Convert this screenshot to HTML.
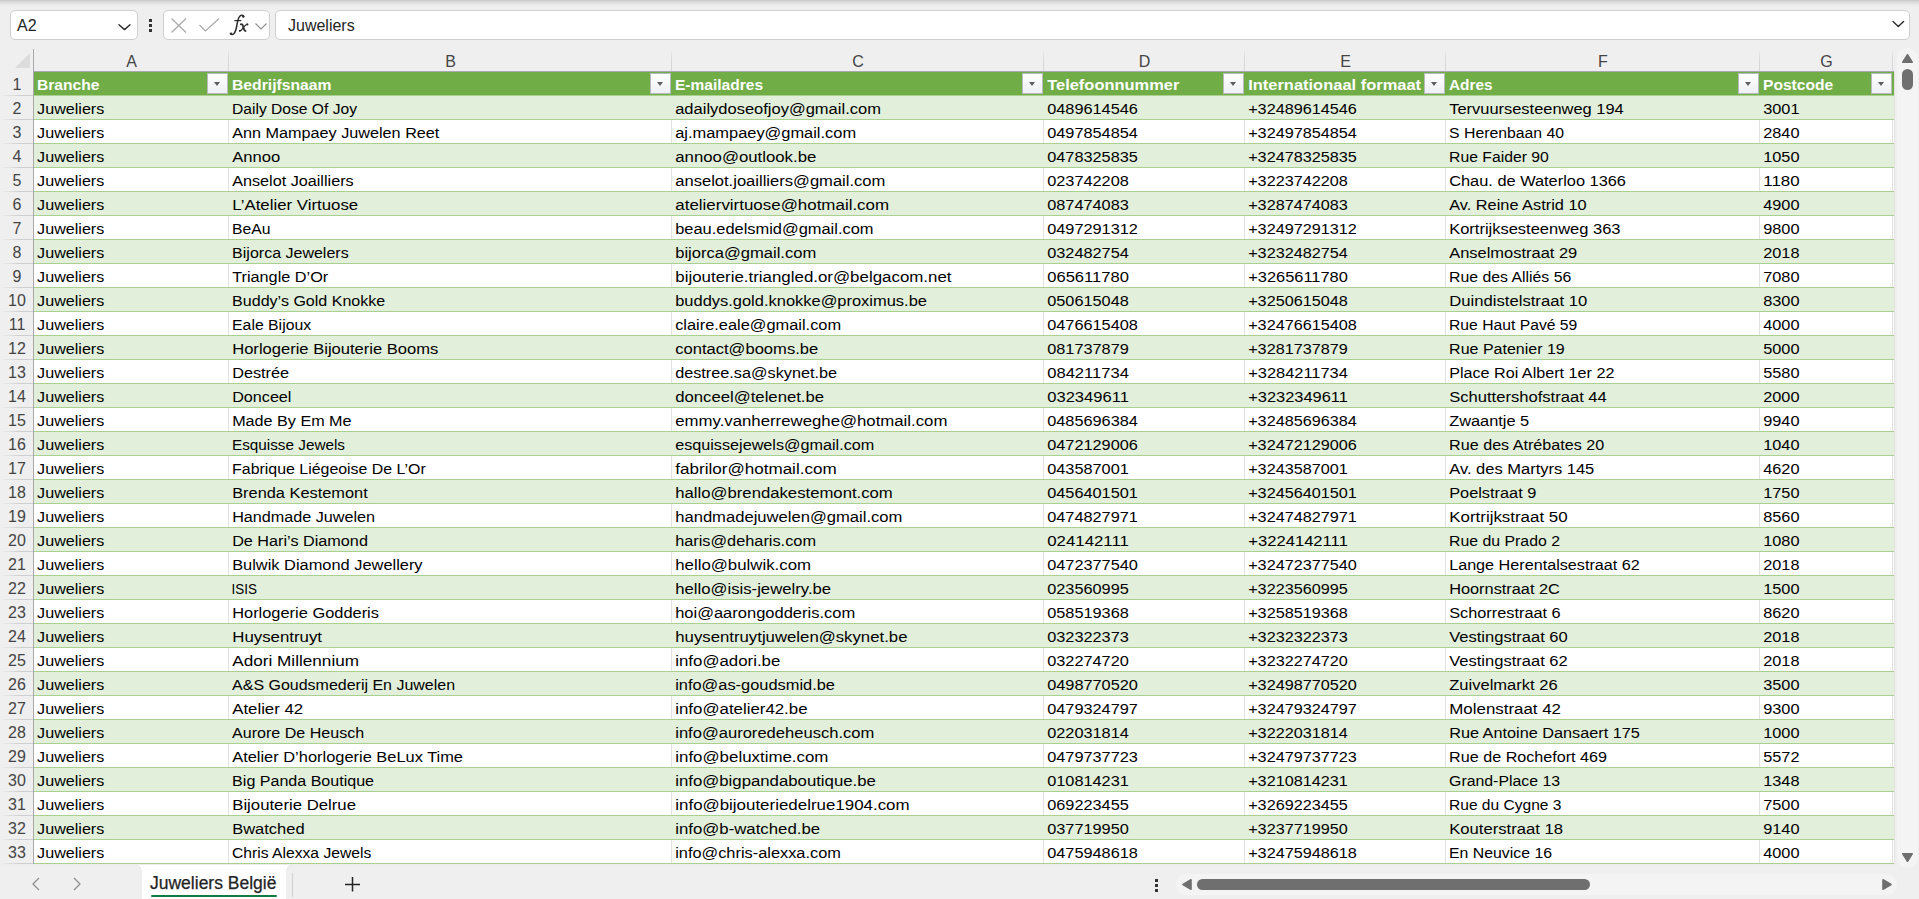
<!DOCTYPE html><html><head><meta charset="utf-8"><style>*{margin:0;padding:0;box-sizing:border-box}
html,body{width:1919px;height:899px;overflow:hidden;background:#efefef;font-family:"Liberation Sans",sans-serif;color:#000;position:relative}
.topshadow{position:absolute;left:0;top:0;width:1919px;height:7px;background:linear-gradient(#c6c6c6,#d9d9d9 25%,#ebebeb 70%,#efefef)}
.box{position:absolute;background:#fff;border:1px solid #cfcfcf;border-radius:5px}
.nb{left:10px;top:10px;width:128px;height:30px}
.nbt{position:absolute;left:17px;top:17px;font-size:16px;line-height:18px;color:#242424}
.dots{position:absolute;left:149px;width:3px;height:3px;background:#333}
.fbx{left:163px;top:10px;width:107px;height:30px}
.fin{left:275px;top:10px;width:1635px;height:30px}
.fint{position:absolute;left:288px;top:17px;font-size:16px;line-height:18px;color:#242424}
svg{position:absolute;overflow:visible}
.colhdr{position:absolute;left:0;top:48px;width:1894px;height:24px}
.selall{position:absolute;left:15px;top:5px;width:0;height:0;border-left:15px solid transparent;border-bottom:15px solid #dcdcdc}
.ch{position:absolute;top:0;height:23px;line-height:28px;padding-left:1px;text-align:center;font-size:16px;color:#444}
.chl{position:absolute;top:1px;width:1px;height:22px;background:linear-gradient(rgba(216,216,216,0),#d8d8d8 45%)}
.colhdr:after{content:"";position:absolute;left:33px;top:23px;width:1861px;height:1px;background:#a8a8b0}
.rh{position:absolute;left:0;width:34px;height:24px;text-align:center;font-size:16px;line-height:26px;color:#444}
.rh:after{content:"";position:absolute;left:0;right:0;bottom:0;height:1px;background:linear-gradient(90deg,rgba(200,200,200,0),#cfcfcf 60%)}
.rhline{position:absolute;left:33px;top:49px;width:1px;height:816px;background:#a9a9a9}
.grid{position:absolute;left:34px;top:72px;width:1860px;height:792px;overflow:hidden}
.row{position:absolute;left:0;width:1860px;height:24px}
.hdr{background:#70ad47}
.band{background:#e2efda;border-bottom:1px solid #a9d08e}
.white{background:#fff;border-bottom:1px solid #a9d08e}
.hdr{border-bottom:1px solid #a9d08e}
.vg{position:absolute;width:1px;height:23px;background:#e1e1e1}
.ht{position:absolute;top:0;height:24px;line-height:25px;padding-left:3px;font-weight:bold;color:#fff;font-size:15.5px;white-space:nowrap;transform-origin:0 0}
.fb{position:absolute;top:1px;width:21px;height:21px;border:1px solid #b9b9c0;background:linear-gradient(#ffffff,#eef0f4)}
.fb i{position:absolute;left:6px;top:8px;width:0;height:0;border-left:3.6px solid transparent;border-right:3.6px solid transparent;border-top:4px solid #5e5e5e}
.c{position:absolute;height:24px;line-height:25px;padding-left:3px;font-size:15.5px;white-space:nowrap;color:#000;transform-origin:0 0}
.c2{letter-spacing:0.3px}
.bbar{position:absolute;left:0;top:864px;width:1919px;height:35px;background:#efefef}
.bbar{background:#fff}
.pl{position:absolute;left:0;top:865px;width:141px;height:34px;background:#efefef;border-top-right-radius:6px;box-shadow:0 0 0 0.6px #e2e2e2}
.pr{position:absolute;left:287px;top:865px;width:1640px;height:34px;background:#efefef;border-top-left-radius:6px;box-shadow:0 0 0 0.6px #e2e2e2}
.tabt{position:absolute;left:150px;top:873px;font-size:17.5px;line-height:20px;color:#242424;-webkit-text-stroke:0.25px #242424;white-space:nowrap}
.tabu{position:absolute;left:151px;top:895px;width:126px;height:2px;background:#107c41;border-radius:1px}
.tsep{position:absolute;left:292px;top:873px;width:1px;height:24px;background:#d0d0d0}
.htrack{position:absolute;left:1176px;top:874px;width:721px;height:21px;border-radius:10.5px;background:#f4f4f4}
.hthumb{position:absolute;left:1197px;top:879px;width:393px;height:11px;border-radius:5.5px;background:#6f6f6f}
.rgap{position:absolute;left:1894px;top:48px;width:25px;height:817px;background:#efefef}
.vtrack{position:absolute;left:1897px;top:48px;width:21px;height:820px;border-radius:10.5px;background:#f4f4f4}
.vthumb{position:absolute;left:1902px;top:69px;width:11px;height:21px;border-radius:5.5px;background:#6f6f6f}
</style></head><body>
<div class="topshadow"></div>
<div class="box nb"></div>
<div class="nbt">A2</div>
<svg style="left:118px;top:24px" width="13" height="7" viewBox="0 0 13 7"><path d="M1 0.8 L6.5 5.6 L12 0.8" fill="none" stroke="#2b2b2b" stroke-width="1.4" stroke-linecap="round" stroke-linejoin="round"/></svg>
<div class="dots" style="top:19px"></div><div class="dots" style="top:24px"></div><div class="dots" style="top:29px"></div>
<div class="box fbx"></div>
<svg style="left:171px;top:18px" width="16" height="15" viewBox="0 0 16 15"><path d="M0.5 0.5 L15 14.5 M15 0.5 L0.5 14.5" fill="none" stroke="#a8a8a8" stroke-width="1.2"/></svg>
<svg style="left:199px;top:18px" width="21" height="14" viewBox="0 0 21 14"><path d="M0.5 7 L6.5 13 L20 0.5" fill="none" stroke="#a8a8a8" stroke-width="1.2"/></svg>
<svg style="left:225px;top:12px" width="30" height="26" viewBox="0 0 30 26"><g fill="none" stroke="#2e2e2e" stroke-linecap="round"><path d="M18.6 4.6 C18.2 3.2 16.2 2.8 14.8 4.2 C13.2 5.8 12.6 9 12 12.5 C11.4 16.5 10.6 20 8.8 21.8 C7.8 22.8 6.4 22.8 5.6 21.8" stroke-width="1.5"/><path d="M9.8 8.6 H15.9" stroke-width="1.1"/><path d="M15.8 12.4 C17 11.8 17.6 12.5 18 14 C18.6 16.5 19 18.6 20.6 19" stroke-width="1.8"/><path d="M22.6 12.2 C21 12.2 19.6 14 17.6 16.6 C16.6 18 15.8 19 14.6 19" stroke-width="1.2"/></g><g fill="#2e2e2e"><circle cx="18.3" cy="4.5" r="1.2"/><circle cx="6.0" cy="21.6" r="1.2"/><circle cx="22.4" cy="12.4" r="1.0"/><circle cx="14.9" cy="18.8" r="1.0"/></g></svg>
<svg style="left:255px;top:23px" width="12" height="7" viewBox="0 0 12 7"><path d="M0.5 0.5 L6 6 L11.5 0.5" fill="none" stroke="#909090" stroke-width="1.1"/></svg>
<div class="box fin"></div>
<div class="fint">Juweliers</div>
<svg style="left:1892px;top:21px" width="13" height="7" viewBox="0 0 13 7"><path d="M1 0.6 L6.3 5.6 L11.6 0.6" fill="none" stroke="#2b2b2b" stroke-width="1.4" stroke-linecap="round" stroke-linejoin="round"/></svg>

<div class="colhdr">
<div class="selall"></div>
<div class="ch" style="left:34px;width:194px">A</div>
<div class="chl" style="left:228px"></div>
<div class="ch" style="left:229px;width:442px">B</div>
<div class="chl" style="left:671px"></div>
<div class="ch" style="left:672px;width:371px">C</div>
<div class="chl" style="left:1043px"></div>
<div class="ch" style="left:1044px;width:200px">D</div>
<div class="chl" style="left:1244px"></div>
<div class="ch" style="left:1245px;width:200px">E</div>
<div class="chl" style="left:1445px"></div>
<div class="ch" style="left:1446px;width:313px">F</div>
<div class="chl" style="left:1759px"></div>
<div class="ch" style="left:1760px;width:132px">G</div>
<div class="chl" style="left:1892px"></div>
</div>
<div class="rh" style="top:72px">1</div>
<div class="rh" style="top:96px">2</div>
<div class="rh" style="top:120px">3</div>
<div class="rh" style="top:144px">4</div>
<div class="rh" style="top:168px">5</div>
<div class="rh" style="top:192px">6</div>
<div class="rh" style="top:216px">7</div>
<div class="rh" style="top:240px">8</div>
<div class="rh" style="top:264px">9</div>
<div class="rh" style="top:288px">10</div>
<div class="rh" style="top:312px">11</div>
<div class="rh" style="top:336px">12</div>
<div class="rh" style="top:360px">13</div>
<div class="rh" style="top:384px">14</div>
<div class="rh" style="top:408px">15</div>
<div class="rh" style="top:432px">16</div>
<div class="rh" style="top:456px">17</div>
<div class="rh" style="top:480px">18</div>
<div class="rh" style="top:504px">19</div>
<div class="rh" style="top:528px">20</div>
<div class="rh" style="top:552px">21</div>
<div class="rh" style="top:576px">22</div>
<div class="rh" style="top:600px">23</div>
<div class="rh" style="top:624px">24</div>
<div class="rh" style="top:648px">25</div>
<div class="rh" style="top:672px">26</div>
<div class="rh" style="top:696px">27</div>
<div class="rh" style="top:720px">28</div>
<div class="rh" style="top:744px">29</div>
<div class="rh" style="top:768px">30</div>
<div class="rh" style="top:792px">31</div>
<div class="rh" style="top:816px">32</div>
<div class="rh" style="top:840px">33</div>
<div class="rhline"></div>
<div class="grid">
<div class="row hdr" style="top:0px"></div>
<div class="row band" style="top:24px"></div>
<div class="row white" style="top:48px"></div>
<div class="row band" style="top:72px"></div>
<div class="row white" style="top:96px"></div>
<div class="row band" style="top:120px"></div>
<div class="row white" style="top:144px"></div>
<div class="row band" style="top:168px"></div>
<div class="row white" style="top:192px"></div>
<div class="row band" style="top:216px"></div>
<div class="row white" style="top:240px"></div>
<div class="row band" style="top:264px"></div>
<div class="row white" style="top:288px"></div>
<div class="row band" style="top:312px"></div>
<div class="row white" style="top:336px"></div>
<div class="row band" style="top:360px"></div>
<div class="row white" style="top:384px"></div>
<div class="row band" style="top:408px"></div>
<div class="row white" style="top:432px"></div>
<div class="row band" style="top:456px"></div>
<div class="row white" style="top:480px"></div>
<div class="row band" style="top:504px"></div>
<div class="row white" style="top:528px"></div>
<div class="row band" style="top:552px"></div>
<div class="row white" style="top:576px"></div>
<div class="row band" style="top:600px"></div>
<div class="row white" style="top:624px"></div>
<div class="row band" style="top:648px"></div>
<div class="row white" style="top:672px"></div>
<div class="row band" style="top:696px"></div>
<div class="row white" style="top:720px"></div>
<div class="row band" style="top:744px"></div>
<div class="row white" style="top:768px"></div>
<div class="vg" style="left:194px;top:48px"></div>
<div class="vg" style="left:637px;top:48px"></div>
<div class="vg" style="left:1009px;top:48px"></div>
<div class="vg" style="left:1210px;top:48px"></div>
<div class="vg" style="left:1411px;top:48px"></div>
<div class="vg" style="left:1725px;top:48px"></div>
<div class="vg" style="left:1858px;top:48px"></div>
<div class="vg" style="left:194px;top:96px"></div>
<div class="vg" style="left:637px;top:96px"></div>
<div class="vg" style="left:1009px;top:96px"></div>
<div class="vg" style="left:1210px;top:96px"></div>
<div class="vg" style="left:1411px;top:96px"></div>
<div class="vg" style="left:1725px;top:96px"></div>
<div class="vg" style="left:1858px;top:96px"></div>
<div class="vg" style="left:194px;top:144px"></div>
<div class="vg" style="left:637px;top:144px"></div>
<div class="vg" style="left:1009px;top:144px"></div>
<div class="vg" style="left:1210px;top:144px"></div>
<div class="vg" style="left:1411px;top:144px"></div>
<div class="vg" style="left:1725px;top:144px"></div>
<div class="vg" style="left:1858px;top:144px"></div>
<div class="vg" style="left:194px;top:192px"></div>
<div class="vg" style="left:637px;top:192px"></div>
<div class="vg" style="left:1009px;top:192px"></div>
<div class="vg" style="left:1210px;top:192px"></div>
<div class="vg" style="left:1411px;top:192px"></div>
<div class="vg" style="left:1725px;top:192px"></div>
<div class="vg" style="left:1858px;top:192px"></div>
<div class="vg" style="left:194px;top:240px"></div>
<div class="vg" style="left:637px;top:240px"></div>
<div class="vg" style="left:1009px;top:240px"></div>
<div class="vg" style="left:1210px;top:240px"></div>
<div class="vg" style="left:1411px;top:240px"></div>
<div class="vg" style="left:1725px;top:240px"></div>
<div class="vg" style="left:1858px;top:240px"></div>
<div class="vg" style="left:194px;top:288px"></div>
<div class="vg" style="left:637px;top:288px"></div>
<div class="vg" style="left:1009px;top:288px"></div>
<div class="vg" style="left:1210px;top:288px"></div>
<div class="vg" style="left:1411px;top:288px"></div>
<div class="vg" style="left:1725px;top:288px"></div>
<div class="vg" style="left:1858px;top:288px"></div>
<div class="vg" style="left:194px;top:336px"></div>
<div class="vg" style="left:637px;top:336px"></div>
<div class="vg" style="left:1009px;top:336px"></div>
<div class="vg" style="left:1210px;top:336px"></div>
<div class="vg" style="left:1411px;top:336px"></div>
<div class="vg" style="left:1725px;top:336px"></div>
<div class="vg" style="left:1858px;top:336px"></div>
<div class="vg" style="left:194px;top:384px"></div>
<div class="vg" style="left:637px;top:384px"></div>
<div class="vg" style="left:1009px;top:384px"></div>
<div class="vg" style="left:1210px;top:384px"></div>
<div class="vg" style="left:1411px;top:384px"></div>
<div class="vg" style="left:1725px;top:384px"></div>
<div class="vg" style="left:1858px;top:384px"></div>
<div class="vg" style="left:194px;top:432px"></div>
<div class="vg" style="left:637px;top:432px"></div>
<div class="vg" style="left:1009px;top:432px"></div>
<div class="vg" style="left:1210px;top:432px"></div>
<div class="vg" style="left:1411px;top:432px"></div>
<div class="vg" style="left:1725px;top:432px"></div>
<div class="vg" style="left:1858px;top:432px"></div>
<div class="vg" style="left:194px;top:480px"></div>
<div class="vg" style="left:637px;top:480px"></div>
<div class="vg" style="left:1009px;top:480px"></div>
<div class="vg" style="left:1210px;top:480px"></div>
<div class="vg" style="left:1411px;top:480px"></div>
<div class="vg" style="left:1725px;top:480px"></div>
<div class="vg" style="left:1858px;top:480px"></div>
<div class="vg" style="left:194px;top:528px"></div>
<div class="vg" style="left:637px;top:528px"></div>
<div class="vg" style="left:1009px;top:528px"></div>
<div class="vg" style="left:1210px;top:528px"></div>
<div class="vg" style="left:1411px;top:528px"></div>
<div class="vg" style="left:1725px;top:528px"></div>
<div class="vg" style="left:1858px;top:528px"></div>
<div class="vg" style="left:194px;top:576px"></div>
<div class="vg" style="left:637px;top:576px"></div>
<div class="vg" style="left:1009px;top:576px"></div>
<div class="vg" style="left:1210px;top:576px"></div>
<div class="vg" style="left:1411px;top:576px"></div>
<div class="vg" style="left:1725px;top:576px"></div>
<div class="vg" style="left:1858px;top:576px"></div>
<div class="vg" style="left:194px;top:624px"></div>
<div class="vg" style="left:637px;top:624px"></div>
<div class="vg" style="left:1009px;top:624px"></div>
<div class="vg" style="left:1210px;top:624px"></div>
<div class="vg" style="left:1411px;top:624px"></div>
<div class="vg" style="left:1725px;top:624px"></div>
<div class="vg" style="left:1858px;top:624px"></div>
<div class="vg" style="left:194px;top:672px"></div>
<div class="vg" style="left:637px;top:672px"></div>
<div class="vg" style="left:1009px;top:672px"></div>
<div class="vg" style="left:1210px;top:672px"></div>
<div class="vg" style="left:1411px;top:672px"></div>
<div class="vg" style="left:1725px;top:672px"></div>
<div class="vg" style="left:1858px;top:672px"></div>
<div class="vg" style="left:194px;top:720px"></div>
<div class="vg" style="left:637px;top:720px"></div>
<div class="vg" style="left:1009px;top:720px"></div>
<div class="vg" style="left:1210px;top:720px"></div>
<div class="vg" style="left:1411px;top:720px"></div>
<div class="vg" style="left:1725px;top:720px"></div>
<div class="vg" style="left:1858px;top:720px"></div>
<div class="vg" style="left:194px;top:768px"></div>
<div class="vg" style="left:637px;top:768px"></div>
<div class="vg" style="left:1009px;top:768px"></div>
<div class="vg" style="left:1210px;top:768px"></div>
<div class="vg" style="left:1411px;top:768px"></div>
<div class="vg" style="left:1725px;top:768px"></div>
<div class="vg" style="left:1858px;top:768px"></div>
<div class="ht" style="left:0px;transform:scaleX(1.007)">Branche</div>
<div class="fb" style="left:173px"><i></i></div>
<div class="ht" style="left:195px;transform:scaleX(1.012)">Bedrijfsnaam</div>
<div class="fb" style="left:616px"><i></i></div>
<div class="ht" style="left:638px;transform:scaleX(1.002)">E-mailadres</div>
<div class="fb" style="left:988px"><i></i></div>
<div class="ht" style="left:1010px;transform:scaleX(1.061)">Telefoonnummer</div>
<div class="fb" style="left:1189px"><i></i></div>
<div class="ht" style="left:1211px;transform:scaleX(1.062)">Internationaal formaat</div>
<div class="fb" style="left:1390px"><i></i></div>
<div class="ht" style="left:1412px;transform:scaleX(0.992)">Adres</div>
<div class="fb" style="left:1704px"><i></i></div>
<div class="ht" style="left:1726px;transform:scaleX(1.006)">Postcode</div>
<div class="fb" style="left:1837px"><i></i></div>
<div class="c" style="left:0px;top:24px;transform:scaleX(1.0398)">Juweliers</div>
<div class="c" style="left:195px;top:24px;transform:scaleX(1.0072)">Daily Dose Of Joy</div>
<div class="c" style="left:638px;top:24px;transform:scaleX(1.0646)">adailydoseofjoy@gmail.com</div>
<div class="c" style="left:1010px;top:24px;transform:scaleX(1.0526)">0489614546</div>
<div class="c" style="left:1211px;top:24px;transform:scaleX(1.0467)">+32489614546</div>
<div class="c" style="left:1412px;top:24px;transform:scaleX(1.0607)">Tervuursesteenweg 194</div>
<div class="c" style="left:1726px;top:24px;transform:scaleX(1.0527)">3001</div>
<div class="c" style="left:0px;top:48px;transform:scaleX(1.0398)">Juweliers</div>
<div class="c" style="left:195px;top:48px;transform:scaleX(1.0458)">Ann Mampaey Juwelen Reet</div>
<div class="c" style="left:638px;top:48px;transform:scaleX(1.0593)">aj.mampaey@gmail.com</div>
<div class="c" style="left:1010px;top:48px;transform:scaleX(1.0526)">0497854854</div>
<div class="c" style="left:1211px;top:48px;transform:scaleX(1.0467)">+32497854854</div>
<div class="c" style="left:1412px;top:48px;transform:scaleX(1.0189)">S Herenbaan 40</div>
<div class="c" style="left:1726px;top:48px;transform:scaleX(1.0527)">2840</div>
<div class="c" style="left:0px;top:72px;transform:scaleX(1.0398)">Juweliers</div>
<div class="c" style="left:195px;top:72px;transform:scaleX(1.0713)">Annoo</div>
<div class="c" style="left:638px;top:72px;transform:scaleX(1.0820)">annoo@outlook.be</div>
<div class="c" style="left:1010px;top:72px;transform:scaleX(1.0526)">0478325835</div>
<div class="c" style="left:1211px;top:72px;transform:scaleX(1.0467)">+32478325835</div>
<div class="c" style="left:1412px;top:72px;transform:scaleX(1.0151)">Rue Faider 90</div>
<div class="c" style="left:1726px;top:72px;transform:scaleX(1.0527)">1050</div>
<div class="c" style="left:0px;top:96px;transform:scaleX(1.0398)">Juweliers</div>
<div class="c" style="left:195px;top:96px;transform:scaleX(1.0448)">Anselot Joailliers</div>
<div class="c" style="left:638px;top:96px;transform:scaleX(1.0687)">anselot.joailliers@gmail.com</div>
<div class="c" style="left:1010px;top:96px;transform:scaleX(1.0526)">023742208</div>
<div class="c" style="left:1211px;top:96px;transform:scaleX(1.0462)">+3223742208</div>
<div class="c" style="left:1412px;top:96px;transform:scaleX(1.0558)">Chau. de Waterloo 1366</div>
<div class="c" style="left:1726px;top:96px;transform:scaleX(1.0887)">1180</div>
<div class="c" style="left:0px;top:120px;transform:scaleX(1.0398)">Juweliers</div>
<div class="c" style="left:195px;top:120px;transform:scaleX(1.0851)">L’Atelier Virtuose</div>
<div class="c" style="left:638px;top:120px;transform:scaleX(1.0921)">ateliervirtuose@hotmail.com</div>
<div class="c" style="left:1010px;top:120px;transform:scaleX(1.0526)">087474083</div>
<div class="c" style="left:1211px;top:120px;transform:scaleX(1.0462)">+3287474083</div>
<div class="c" style="left:1412px;top:120px;transform:scaleX(1.0538)">Av. Reine Astrid 10</div>
<div class="c" style="left:1726px;top:120px;transform:scaleX(1.0527)">4900</div>
<div class="c" style="left:0px;top:144px;transform:scaleX(1.0398)">Juweliers</div>
<div class="c" style="left:195px;top:144px;transform:scaleX(1.0130)">BeAu</div>
<div class="c" style="left:638px;top:144px;transform:scaleX(1.0594)">beau.edelsmid@gmail.com</div>
<div class="c" style="left:1010px;top:144px;transform:scaleX(1.0526)">0497291312</div>
<div class="c" style="left:1211px;top:144px;transform:scaleX(1.0467)">+32497291312</div>
<div class="c" style="left:1412px;top:144px;transform:scaleX(1.0632)">Kortrijksesteenweg 363</div>
<div class="c" style="left:1726px;top:144px;transform:scaleX(1.0527)">9800</div>
<div class="c" style="left:0px;top:168px;transform:scaleX(1.0398)">Juweliers</div>
<div class="c" style="left:195px;top:168px;transform:scaleX(1.0330)">Bijorca Jewelers</div>
<div class="c" style="left:638px;top:168px;transform:scaleX(1.0679)">bijorca@gmail.com</div>
<div class="c" style="left:1010px;top:168px;transform:scaleX(1.0526)">032482754</div>
<div class="c" style="left:1211px;top:168px;transform:scaleX(1.0462)">+3232482754</div>
<div class="c" style="left:1412px;top:168px;transform:scaleX(1.0619)">Anselmostraat 29</div>
<div class="c" style="left:1726px;top:168px;transform:scaleX(1.0527)">2018</div>
<div class="c" style="left:0px;top:192px;transform:scaleX(1.0398)">Juweliers</div>
<div class="c" style="left:195px;top:192px;transform:scaleX(1.0493)">Triangle D’Or</div>
<div class="c" style="left:638px;top:192px;transform:scaleX(1.0895)">bijouterie.triangled.or@belgacom.net</div>
<div class="c" style="left:1010px;top:192px;transform:scaleX(1.0686)">065611780</div>
<div class="c" style="left:1211px;top:192px;transform:scaleX(1.0591)">+3265611780</div>
<div class="c" style="left:1412px;top:192px;transform:scaleX(1.0202)">Rue des Alliés 56</div>
<div class="c" style="left:1726px;top:192px;transform:scaleX(1.0527)">7080</div>
<div class="c" style="left:0px;top:216px;transform:scaleX(1.0398)">Juweliers</div>
<div class="c" style="left:195px;top:216px;transform:scaleX(1.0355)">Buddy’s Gold Knokke</div>
<div class="c" style="left:638px;top:216px;transform:scaleX(1.0616)">buddys.gold.knokke@proximus.be</div>
<div class="c" style="left:1010px;top:216px;transform:scaleX(1.0526)">050615048</div>
<div class="c" style="left:1211px;top:216px;transform:scaleX(1.0462)">+3250615048</div>
<div class="c" style="left:1412px;top:216px;transform:scaleX(1.0749)">Duindistelstraat 10</div>
<div class="c" style="left:1726px;top:216px;transform:scaleX(1.0527)">8300</div>
<div class="c" style="left:0px;top:240px;transform:scaleX(1.0398)">Juweliers</div>
<div class="c" style="left:195px;top:240px;transform:scaleX(1.0196)">Eale Bijoux</div>
<div class="c" style="left:638px;top:240px;transform:scaleX(1.0567)">claire.eale@gmail.com</div>
<div class="c" style="left:1010px;top:240px;transform:scaleX(1.0526)">0476615408</div>
<div class="c" style="left:1211px;top:240px;transform:scaleX(1.0467)">+32476615408</div>
<div class="c" style="left:1412px;top:240px;transform:scaleX(1.0126)">Rue Haut Pavé 59</div>
<div class="c" style="left:1726px;top:240px;transform:scaleX(1.0527)">4000</div>
<div class="c" style="left:0px;top:264px;transform:scaleX(1.0398)">Juweliers</div>
<div class="c" style="left:195px;top:264px;transform:scaleX(1.0679)">Horlogerie Bijouterie Booms</div>
<div class="c" style="left:638px;top:264px;transform:scaleX(1.0689)">contact@booms.be</div>
<div class="c" style="left:1010px;top:264px;transform:scaleX(1.0526)">081737879</div>
<div class="c" style="left:1211px;top:264px;transform:scaleX(1.0462)">+3281737879</div>
<div class="c" style="left:1412px;top:264px;transform:scaleX(1.0325)">Rue Patenier 19</div>
<div class="c" style="left:1726px;top:264px;transform:scaleX(1.0527)">5000</div>
<div class="c" style="left:0px;top:288px;transform:scaleX(1.0398)">Juweliers</div>
<div class="c" style="left:195px;top:288px;transform:scaleX(1.0500)">Destrée</div>
<div class="c" style="left:638px;top:288px;transform:scaleX(1.0483)">destree.sa@skynet.be</div>
<div class="c" style="left:1010px;top:288px;transform:scaleX(1.0686)">084211734</div>
<div class="c" style="left:1211px;top:288px;transform:scaleX(1.0591)">+3284211734</div>
<div class="c" style="left:1412px;top:288px;transform:scaleX(1.0423)">Place Roi Albert 1er 22</div>
<div class="c" style="left:1726px;top:288px;transform:scaleX(1.0527)">5580</div>
<div class="c" style="left:0px;top:312px;transform:scaleX(1.0398)">Juweliers</div>
<div class="c" style="left:195px;top:312px;transform:scaleX(1.0433)">Donceel</div>
<div class="c" style="left:638px;top:312px;transform:scaleX(1.0777)">donceel@telenet.be</div>
<div class="c" style="left:1010px;top:312px;transform:scaleX(1.0686)">032349611</div>
<div class="c" style="left:1211px;top:312px;transform:scaleX(1.0591)">+3232349611</div>
<div class="c" style="left:1412px;top:312px;transform:scaleX(1.0697)">Schuttershofstraat 44</div>
<div class="c" style="left:1726px;top:312px;transform:scaleX(1.0527)">2000</div>
<div class="c" style="left:0px;top:336px;transform:scaleX(1.0398)">Juweliers</div>
<div class="c" style="left:195px;top:336px;transform:scaleX(1.0425)">Made By Em Me</div>
<div class="c" style="left:638px;top:336px;transform:scaleX(1.0822)">emmy.vanherreweghe@hotmail.com</div>
<div class="c" style="left:1010px;top:336px;transform:scaleX(1.0526)">0485696384</div>
<div class="c" style="left:1211px;top:336px;transform:scaleX(1.0467)">+32485696384</div>
<div class="c" style="left:1412px;top:336px;transform:scaleX(1.0554)">Zwaantje 5</div>
<div class="c" style="left:1726px;top:336px;transform:scaleX(1.0527)">9940</div>
<div class="c" style="left:0px;top:360px;transform:scaleX(1.0398)">Juweliers</div>
<div class="c" style="left:195px;top:360px;transform:scaleX(0.9864)">Esquisse Jewels</div>
<div class="c" style="left:638px;top:360px;transform:scaleX(1.0446)">esquissejewels@gmail.com</div>
<div class="c" style="left:1010px;top:360px;transform:scaleX(1.0526)">0472129006</div>
<div class="c" style="left:1211px;top:360px;transform:scaleX(1.0467)">+32472129006</div>
<div class="c" style="left:1412px;top:360px;transform:scaleX(1.0399)">Rue des Atrébates 20</div>
<div class="c" style="left:1726px;top:360px;transform:scaleX(1.0527)">1040</div>
<div class="c" style="left:0px;top:384px;transform:scaleX(1.0398)">Juweliers</div>
<div class="c" style="left:195px;top:384px;transform:scaleX(1.0266)">Fabrique Liégeoise De L’Or</div>
<div class="c" style="left:638px;top:384px;transform:scaleX(1.1001)">fabrilor@hotmail.com</div>
<div class="c" style="left:1010px;top:384px;transform:scaleX(1.0526)">043587001</div>
<div class="c" style="left:1211px;top:384px;transform:scaleX(1.0462)">+3243587001</div>
<div class="c" style="left:1412px;top:384px;transform:scaleX(1.0638)">Av. des Martyrs 145</div>
<div class="c" style="left:1726px;top:384px;transform:scaleX(1.0527)">4620</div>
<div class="c" style="left:0px;top:408px;transform:scaleX(1.0398)">Juweliers</div>
<div class="c" style="left:195px;top:408px;transform:scaleX(1.0560)">Brenda Kestemont</div>
<div class="c" style="left:638px;top:408px;transform:scaleX(1.0777)">hallo@brendakestemont.com</div>
<div class="c" style="left:1010px;top:408px;transform:scaleX(1.0526)">0456401501</div>
<div class="c" style="left:1211px;top:408px;transform:scaleX(1.0467)">+32456401501</div>
<div class="c" style="left:1412px;top:408px;transform:scaleX(1.0543)">Poelstraat 9</div>
<div class="c" style="left:1726px;top:408px;transform:scaleX(1.0527)">1750</div>
<div class="c" style="left:0px;top:432px;transform:scaleX(1.0398)">Juweliers</div>
<div class="c" style="left:195px;top:432px;transform:scaleX(1.0436)">Handmade Juwelen</div>
<div class="c" style="left:638px;top:432px;transform:scaleX(1.0705)">handmadejuwelen@gmail.com</div>
<div class="c" style="left:1010px;top:432px;transform:scaleX(1.0526)">0474827971</div>
<div class="c" style="left:1211px;top:432px;transform:scaleX(1.0467)">+32474827971</div>
<div class="c" style="left:1412px;top:432px;transform:scaleX(1.0902)">Kortrijkstraat 50</div>
<div class="c" style="left:1726px;top:432px;transform:scaleX(1.0527)">8560</div>
<div class="c" style="left:0px;top:456px;transform:scaleX(1.0398)">Juweliers</div>
<div class="c" style="left:195px;top:456px;transform:scaleX(1.0460)">De Hari’s Diamond</div>
<div class="c" style="left:638px;top:456px;transform:scaleX(1.0529)">haris@deharis.com</div>
<div class="c" style="left:1010px;top:456px;transform:scaleX(1.0847)">024142111</div>
<div class="c" style="left:1211px;top:456px;transform:scaleX(1.0721)">+3224142111</div>
<div class="c" style="left:1412px;top:456px;transform:scaleX(1.0218)">Rue du Prado 2</div>
<div class="c" style="left:1726px;top:456px;transform:scaleX(1.0527)">1080</div>
<div class="c" style="left:0px;top:480px;transform:scaleX(1.0398)">Juweliers</div>
<div class="c" style="left:195px;top:480px;transform:scaleX(1.0574)">Bulwik Diamond Jewellery</div>
<div class="c" style="left:638px;top:480px;transform:scaleX(1.0848)">hello@bulwik.com</div>
<div class="c" style="left:1010px;top:480px;transform:scaleX(1.0526)">0472377540</div>
<div class="c" style="left:1211px;top:480px;transform:scaleX(1.0467)">+32472377540</div>
<div class="c" style="left:1412px;top:480px;transform:scaleX(1.0437)">Lange Herentalsestraat 62</div>
<div class="c" style="left:1726px;top:480px;transform:scaleX(1.0527)">2018</div>
<div class="c" style="left:0px;top:504px;transform:scaleX(1.0398)">Juweliers</div>
<div class="c" style="left:195px;top:504px;transform:scaleX(0.8688)">ISIS</div>
<div class="c" style="left:638px;top:504px;transform:scaleX(1.0774)">hello@isis-jewelry.be</div>
<div class="c" style="left:1010px;top:504px;transform:scaleX(1.0526)">023560995</div>
<div class="c" style="left:1211px;top:504px;transform:scaleX(1.0462)">+3223560995</div>
<div class="c" style="left:1412px;top:504px;transform:scaleX(1.0533)">Hoornstraat 2C</div>
<div class="c" style="left:1726px;top:504px;transform:scaleX(1.0527)">1500</div>
<div class="c" style="left:0px;top:528px;transform:scaleX(1.0398)">Juweliers</div>
<div class="c" style="left:195px;top:528px;transform:scaleX(1.0582)">Horlogerie Godderis</div>
<div class="c" style="left:638px;top:528px;transform:scaleX(1.0642)">hoi@aarongodderis.com</div>
<div class="c" style="left:1010px;top:528px;transform:scaleX(1.0526)">058519368</div>
<div class="c" style="left:1211px;top:528px;transform:scaleX(1.0462)">+3258519368</div>
<div class="c" style="left:1412px;top:528px;transform:scaleX(1.0525)">Schorrestraat 6</div>
<div class="c" style="left:1726px;top:528px;transform:scaleX(1.0527)">8620</div>
<div class="c" style="left:0px;top:552px;transform:scaleX(1.0398)">Juweliers</div>
<div class="c" style="left:195px;top:552px;transform:scaleX(1.0848)">Huysentruyt</div>
<div class="c" style="left:638px;top:552px;transform:scaleX(1.0812)">huysentruytjuwelen@skynet.be</div>
<div class="c" style="left:1010px;top:552px;transform:scaleX(1.0526)">032322373</div>
<div class="c" style="left:1211px;top:552px;transform:scaleX(1.0462)">+3232322373</div>
<div class="c" style="left:1412px;top:552px;transform:scaleX(1.0665)">Vestingstraat 60</div>
<div class="c" style="left:1726px;top:552px;transform:scaleX(1.0527)">2018</div>
<div class="c" style="left:0px;top:576px;transform:scaleX(1.0398)">Juweliers</div>
<div class="c" style="left:195px;top:576px;transform:scaleX(1.1058)">Adori Millennium</div>
<div class="c" style="left:638px;top:576px;transform:scaleX(1.0857)">info@adori.be</div>
<div class="c" style="left:1010px;top:576px;transform:scaleX(1.0526)">032274720</div>
<div class="c" style="left:1211px;top:576px;transform:scaleX(1.0462)">+3232274720</div>
<div class="c" style="left:1412px;top:576px;transform:scaleX(1.0665)">Vestingstraat 62</div>
<div class="c" style="left:1726px;top:576px;transform:scaleX(1.0527)">2018</div>
<div class="c" style="left:0px;top:600px;transform:scaleX(1.0398)">Juweliers</div>
<div class="c" style="left:195px;top:600px;transform:scaleX(1.0310)">A&amp;S Goudsmederij En Juwelen</div>
<div class="c" style="left:638px;top:600px;transform:scaleX(1.0581)">info@as-goudsmid.be</div>
<div class="c" style="left:1010px;top:600px;transform:scaleX(1.0526)">0498770520</div>
<div class="c" style="left:1211px;top:600px;transform:scaleX(1.0467)">+32498770520</div>
<div class="c" style="left:1412px;top:600px;transform:scaleX(1.0667)">Zuivelmarkt 26</div>
<div class="c" style="left:1726px;top:600px;transform:scaleX(1.0527)">3500</div>
<div class="c" style="left:0px;top:624px;transform:scaleX(1.0398)">Juweliers</div>
<div class="c" style="left:195px;top:624px;transform:scaleX(1.0816)">Atelier 42</div>
<div class="c" style="left:638px;top:624px;transform:scaleX(1.0866)">info@atelier42.be</div>
<div class="c" style="left:1010px;top:624px;transform:scaleX(1.0526)">0479324797</div>
<div class="c" style="left:1211px;top:624px;transform:scaleX(1.0467)">+32479324797</div>
<div class="c" style="left:1412px;top:624px;transform:scaleX(1.0897)">Molenstraat 42</div>
<div class="c" style="left:1726px;top:624px;transform:scaleX(1.0527)">9300</div>
<div class="c" style="left:0px;top:648px;transform:scaleX(1.0398)">Juweliers</div>
<div class="c" style="left:195px;top:648px;transform:scaleX(1.0355)">Aurore De Heusch</div>
<div class="c" style="left:638px;top:648px;transform:scaleX(1.0684)">info@auroredeheusch.com</div>
<div class="c" style="left:1010px;top:648px;transform:scaleX(1.0526)">022031814</div>
<div class="c" style="left:1211px;top:648px;transform:scaleX(1.0462)">+3222031814</div>
<div class="c" style="left:1412px;top:648px;transform:scaleX(1.0488)">Rue Antoine Dansaert 175</div>
<div class="c" style="left:1726px;top:648px;transform:scaleX(1.0527)">1000</div>
<div class="c" style="left:0px;top:672px;transform:scaleX(1.0398)">Juweliers</div>
<div class="c" style="left:195px;top:672px;transform:scaleX(1.0590)">Atelier D’horlogerie BeLux Time</div>
<div class="c" style="left:638px;top:672px;transform:scaleX(1.0888)">info@beluxtime.com</div>
<div class="c" style="left:1010px;top:672px;transform:scaleX(1.0526)">0479737723</div>
<div class="c" style="left:1211px;top:672px;transform:scaleX(1.0467)">+32479737723</div>
<div class="c" style="left:1412px;top:672px;transform:scaleX(1.0410)">Rue de Rochefort 469</div>
<div class="c" style="left:1726px;top:672px;transform:scaleX(1.0527)">5572</div>
<div class="c" style="left:0px;top:696px;transform:scaleX(1.0398)">Juweliers</div>
<div class="c" style="left:195px;top:696px;transform:scaleX(1.0357)">Big Panda Boutique</div>
<div class="c" style="left:638px;top:696px;transform:scaleX(1.0812)">info@bigpandaboutique.be</div>
<div class="c" style="left:1010px;top:696px;transform:scaleX(1.0526)">010814231</div>
<div class="c" style="left:1211px;top:696px;transform:scaleX(1.0462)">+3210814231</div>
<div class="c" style="left:1412px;top:696px;transform:scaleX(1.0224)">Grand-Place 13</div>
<div class="c" style="left:1726px;top:696px;transform:scaleX(1.0527)">1348</div>
<div class="c" style="left:0px;top:720px;transform:scaleX(1.0398)">Juweliers</div>
<div class="c" style="left:195px;top:720px;transform:scaleX(1.0798)">Bijouterie Delrue</div>
<div class="c" style="left:638px;top:720px;transform:scaleX(1.0909)">info@bijouteriedelrue1904.com</div>
<div class="c" style="left:1010px;top:720px;transform:scaleX(1.0526)">069223455</div>
<div class="c" style="left:1211px;top:720px;transform:scaleX(1.0462)">+3269223455</div>
<div class="c" style="left:1412px;top:720px;transform:scaleX(1.0036)">Rue du Cygne 3</div>
<div class="c" style="left:1726px;top:720px;transform:scaleX(1.0527)">7500</div>
<div class="c" style="left:0px;top:744px;transform:scaleX(1.0398)">Juweliers</div>
<div class="c" style="left:195px;top:744px;transform:scaleX(1.0633)">Bwatched</div>
<div class="c" style="left:638px;top:744px;transform:scaleX(1.0823)">info@b-watched.be</div>
<div class="c" style="left:1010px;top:744px;transform:scaleX(1.0526)">037719950</div>
<div class="c" style="left:1211px;top:744px;transform:scaleX(1.0462)">+3237719950</div>
<div class="c" style="left:1412px;top:744px;transform:scaleX(1.0745)">Kouterstraat 18</div>
<div class="c" style="left:1726px;top:744px;transform:scaleX(1.0527)">9140</div>
<div class="c" style="left:0px;top:768px;transform:scaleX(1.0398)">Juweliers</div>
<div class="c" style="left:195px;top:768px;transform:scaleX(1.0104)">Chris Alexxa Jewels</div>
<div class="c" style="left:638px;top:768px;transform:scaleX(1.0555)">info@chris-alexxa.com</div>
<div class="c" style="left:1010px;top:768px;transform:scaleX(1.0526)">0475948618</div>
<div class="c" style="left:1211px;top:768px;transform:scaleX(1.0467)">+32475948618</div>
<div class="c" style="left:1412px;top:768px;transform:scaleX(1.0210)">En Neuvice 16</div>
<div class="c" style="left:1726px;top:768px;transform:scaleX(1.0527)">4000</div>
</div>
<div class="bbar"></div>
<div class="pl"></div>
<div class="pr"></div>
<div class="tabt">Juweliers België</div>
<div class="tabu"></div>
<div class="tsep"></div>
<svg style="left:31px;top:877px" width="10" height="14" viewBox="0 0 10 14"><path d="M8 1 L2 7 L8 13" fill="none" stroke="#8f8f8f" stroke-width="1.3"/></svg>
<svg style="left:72px;top:877px" width="10" height="14" viewBox="0 0 10 14"><path d="M2 1 L8 7 L2 13" fill="none" stroke="#8f8f8f" stroke-width="1.3"/></svg>
<svg style="left:344px;top:876px" width="17" height="17" viewBox="0 0 17 17"><path d="M8.5 1 V15.5 M1 8.5 H16" fill="none" stroke="#242424" stroke-width="1.5"/></svg>
<div class="dots" style="left:1155px;top:879px"></div><div class="dots" style="left:1155px;top:884px"></div><div class="dots" style="left:1155px;top:889px"></div>
<div class="htrack"></div>
<svg style="left:1182px;top:879px" width="10" height="11" viewBox="0 0 10 11"><path d="M9 0.8 L9 10.2 L1 5.5 Z" fill="#6f6f6f" stroke="#6f6f6f" stroke-width="1.6" stroke-linejoin="round"/></svg>
<div class="hthumb"></div>
<svg style="left:1882px;top:879px" width="10" height="11" viewBox="0 0 10 11"><path d="M1 0.8 L1 10.2 L9 5.5 Z" fill="#6f6f6f" stroke="#6f6f6f" stroke-width="1.6" stroke-linejoin="round"/></svg>
<div class="rgap"></div>
<div style="position:absolute;left:1894px;top:72px;width:1px;height:793px;background:#e2e2e2"></div><div style="position:absolute;left:0;top:864px;width:1895px;height:1px;background:#eceeea"></div>
<div class="vtrack"></div>
<svg style="left:1902px;top:54px" width="11" height="9" viewBox="0 0 11 9"><path d="M0.8 8.2 L10.2 8.2 L5.5 0.8 Z" fill="#6f6f6f" stroke="#6f6f6f" stroke-width="1.6" stroke-linejoin="round"/></svg>
<div class="vthumb"></div>
<svg style="left:1902px;top:853px" width="11" height="9" viewBox="0 0 11 9"><path d="M0.8 0.8 L10.2 0.8 L5.5 8.2 Z" fill="#6f6f6f" stroke="#6f6f6f" stroke-width="1.6" stroke-linejoin="round"/></svg>

</body></html>
